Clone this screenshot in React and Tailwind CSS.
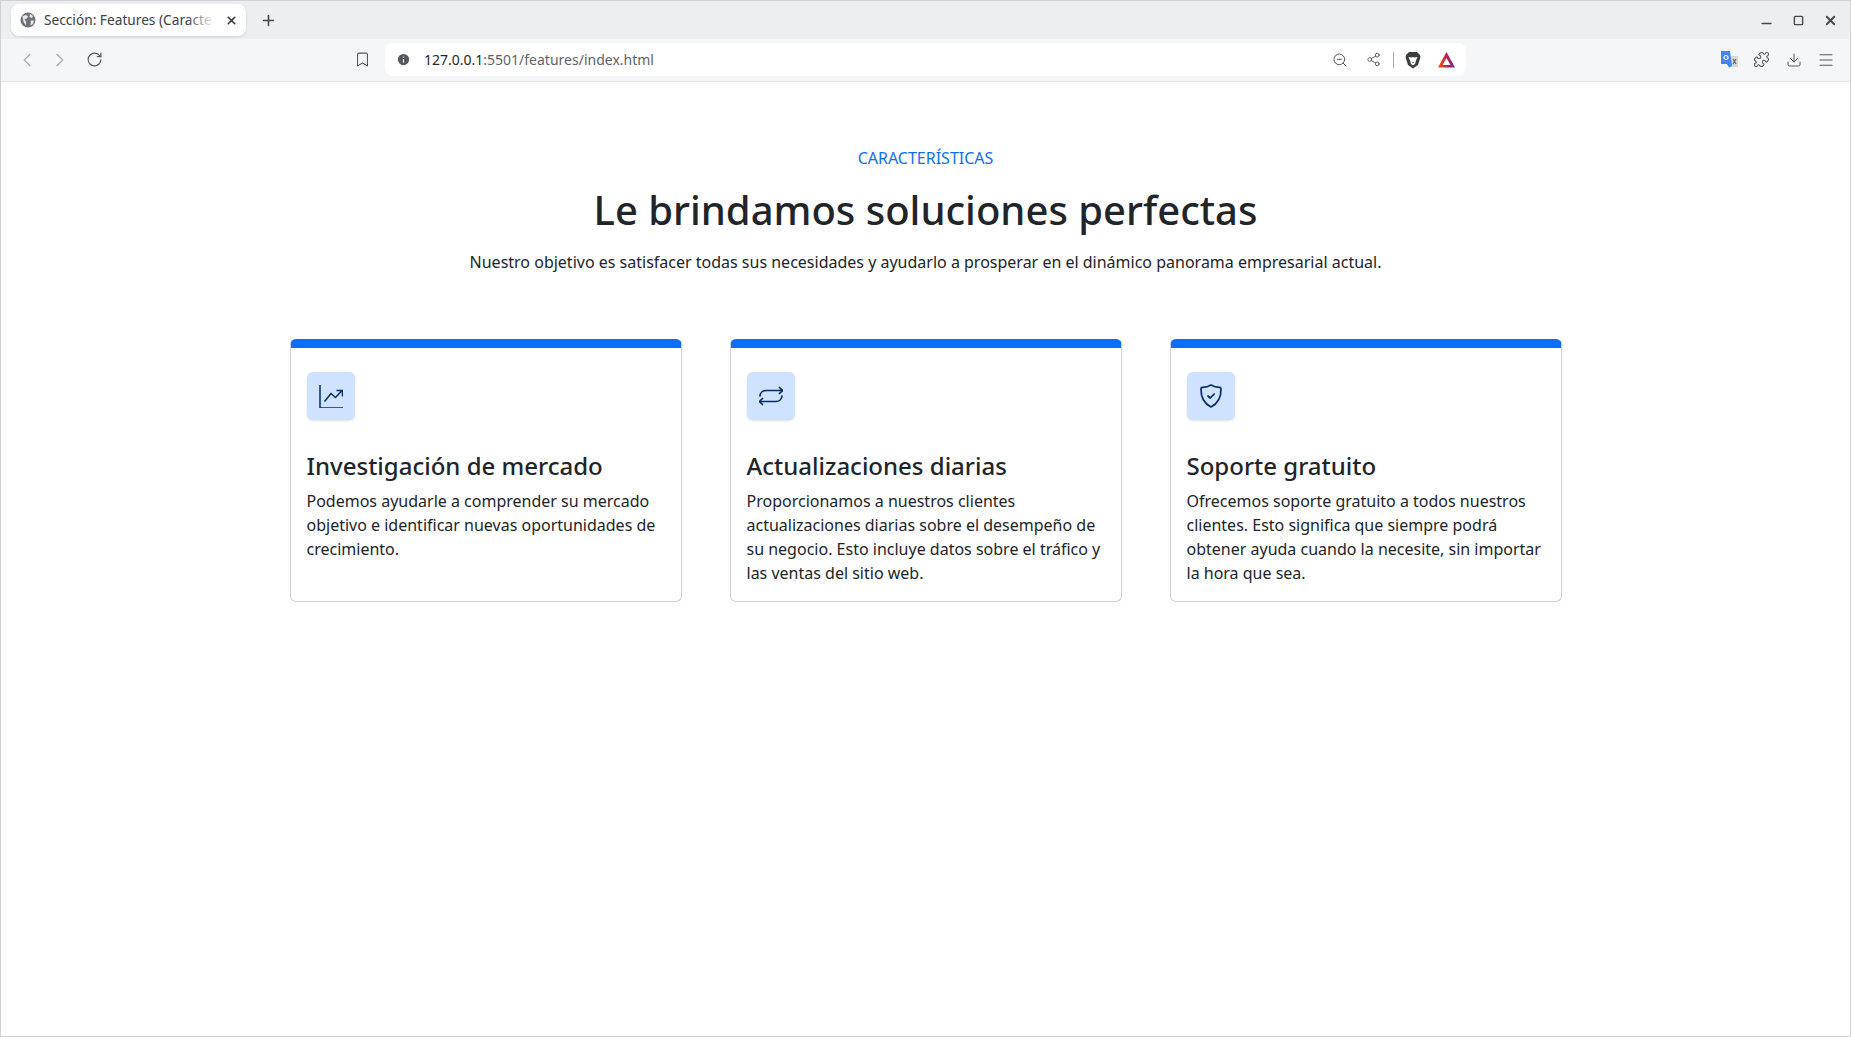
import { ChevronLeft, ChevronRight, RotateCw, Bookmark, Info, ZoomOut, Share2, Puzzle, Download, Menu, Plus, X, Minus, Square } from "lucide-react";

function ChartIcon() {
    return (
        <svg width="24" height="24" viewBox="0 0 24 24" fill="none" stroke="currentColor" strokeWidth="1.5">
            <path d="M1 1v23h23" />
            <path d="M5.500 17.500L12 9.500l4.500 4L23 6.500" />
            <path d="M17.500 6.500H23.500V12.500" />
        </svg>
    );
}

function RepeatIcon() {
    return (
        <svg width="24" height="24" viewBox="0 0 24 24" fill="none" stroke="currentColor" strokeWidth="1.7" strokeLinecap="round" strokeLinejoin="round">
            <path d="M1 12a6 6 0 0 1 6-5.500h16" />
            <path d="M20.500 3.500l3 3-3 3" />
            <path d="M23 12a6 6 0 0 1-6 5.500H1" />
            <path d="M3.500 14.500l-3 3 3 3" />
        </svg>
    );
}

function ShieldIcon() {
    return (
        <svg width="24" height="24" viewBox="0 0 24 24" fill="none" stroke="currentColor" strokeWidth="1.7" strokeLinecap="round" strokeLinejoin="round">
            <path d="M12 1C9.500 2.500 6.500 3.300 3.500 3.300 2.500 3.300 2 3.800 2 4.800 1.800 13 5 19.500 12 23 19 19.500 22.200 13 22 4.800 22 3.800 21.500 3.300 20.500 3.300 17.500 3.300 14.500 2.500 12 1z" />
            <path d="M9 12l2.200 2 4-4" />
        </svg>
    );
}

const features = [
    {
        title: "Investigación de mercado",
        text: "Podemos ayudarle a comprender su mercado objetivo e identificar nuevas oportunidades de crecimiento.",
        icon: ChartIcon,
    },
    {
        title: "Actualizaciones diarias",
        text: "Proporcionamos a nuestros clientes actualizaciones diarias sobre el desempeño de su negocio. Esto incluye datos sobre el tráfico y las ventas del sitio web.",
        icon: RepeatIcon,
    },
    {
        title: "Soporte gratuito",
        text: "Ofrecemos soporte gratuito a todos nuestros clientes. Esto significa que siempre podrá obtener ayuda cuando la necesite, sin importar la hora que sea.",
        icon: ShieldIcon,
    },
];

function BrowserBar() {
    return (
        <header className="shrink-0 font-['Noto_Sans',sans-serif]">
            <div className="h-[38px] bg-[#eceef1] flex items-end pl-[10px] pr-[12px]">
                <div className="relative w-[235px] h-[32px] mb-[3px] bg-white rounded-lg flex items-center pl-[9px] pr-[8px] gap-[8px] shadow-sm">
                    <svg width="16" height="16" viewBox="0 0 16 16" className="shrink-0">
                        <circle cx="8" cy="8" r="7.500" fill="#6f7377" />
                        <path d="M2.500 4L6 3l2 1.500-1 2-2.500.5L6 10v3.500L3.500 10zM10 2l3 2-1 2-2.500-1zM11 8.500h3l-1 3.500-2.500 1.500z" fill="#e8eaed" />
                    </svg>
                    <span className="text-[13.7px] text-[#3c4043] whitespace-nowrap w-[170px] overflow-hidden shrink-0">Sección: Features (Caracte</span>
                    <span className="absolute left-[176px] top-0 w-[28px] h-[32px] bg-gradient-to-r from-transparent to-white"></span>
                    <X size={13} className="relative text-[#33363a] shrink-0 ml-auto" strokeWidth={3} />
                </div>
                <div className="h-[37px] ml-[14px] flex items-center">
                    <Plus size={17} className="text-[#44474b]" strokeWidth={2.2} />
                </div>
                <div className="ml-auto h-[38px] flex items-center pt-[1px]">
                    <Minus size={15} className="text-[#44474b] mt-[5px]" strokeWidth={2.5} />
                    <Square size={11} className="text-[#44474b] ml-[19px]" strokeWidth={3} />
                    <X size={15} className="text-[#44474b] ml-[19px]" strokeWidth={3} />
                </div>
            </div>
            <div className="h-[43px] bg-[#f5f6f8] border-b border-[#e4e6e9] flex items-center pl-[15px] pr-[15px] pb-[1px]">
                <ChevronLeft size={22} className="text-[#a6aaae]" strokeWidth={1.3} />
                <ChevronRight size={22} className="text-[#a6aaae] ml-[11px]" strokeWidth={1.3} />
                <RotateCw size={17} className="text-[#55585c] ml-[15px]" strokeWidth={1.6} />
                <Bookmark size={17} className="text-[#55585c] ml-[251px]" strokeWidth={1.5} />
                <div className="ml-[14px] w-[1081px] h-[33px] bg-white rounded-lg flex items-center pl-[11px] pr-[11px]">
                    <Info size={15} className="text-white fill-[#55585c] shrink-0" strokeWidth={2} />
                    <span className="ml-[13px] text-[14px] text-[#24272a]">127.0.0.1<span className="text-[#5f6368]">:5501/features/index.html</span></span>
                    <div className="ml-auto flex items-center">
                        <ZoomOut size={16} className="text-[#55585c]" strokeWidth={1.5} />
                        <Share2 size={15} className="text-[#55585c] ml-[18px]" strokeWidth={1.5} />
                        <div className="w-px h-[16px] bg-[#a8abae] ml-[12px]"></div>
                        <svg width="16" height="18" viewBox="0 0 16 18" className="ml-[11px]">
                            <path d="M4 1h8l2.500 2.500L15.500 6 13 14l-5 3.500L3 14 .5 6l1-2.500z" fill="#3a3d40" />
                            <path d="M3.500 6l3 .5L8 6l1.500.5 3-.5-1.500 3.500-1 3.500-2 1.500-2-1.500-1-3.500z" fill="#fff" />
                            <path d="M7 11h2l-1 1.500z" fill="#3a3d40" />
                        </svg>
                        <svg width="17" height="16" viewBox="0 0 17 16" className="ml-[17px]">
                            <defs>
                                <linearGradient id="bat" x1="0" y1="0" x2="1" y2="0">
                                    <stop offset="0" stopColor="#ff5000" />
                                    <stop offset="0.5" stopColor="#c4204a" />
                                    <stop offset="1" stopColor="#662d91" />
                                </linearGradient>
                            </defs>
                            <path fillRule="evenodd" d="M8.500 0L17 15.500H0zM8.500 6L4.500 13h8z" fill="url(#bat)" />
                        </svg>
                    </div>
                </div>
                <div className="ml-auto flex items-center">
                    <svg width="17" height="17" viewBox="0 0 17 17">
                        <rect x="8" y="5" width="9" height="11" fill="#d5d7da" />
                        <path d="M0 0h9l2 15-3 1.500L6 13H0z" fill="#4285f4" />
                        <path d="M12 8l3 5M15 8l-3 5" stroke="#666" strokeWidth="1.200" />
                        <circle cx="5" cy="6.500" r="2" fill="none" stroke="#fff" strokeWidth="1.200" />
                    </svg>
                    <Puzzle size={17} className="text-[#55585c] ml-[15px]" strokeWidth={1.5} />
                    <Download size={16} className="text-[#55585c] ml-[16px]" strokeWidth={1.5} />
                    <Menu size={18} className="text-[#55585c] ml-[15px]" strokeWidth={1.5} />
                </div>
            </div>
        </header>
    );
}

function FeatureCard({ title, text, icon: Icon }) {
    return (
        <div className="bg-white border border-[#cfd1d4] border-t-[9px] border-t-[#0d6efd] rounded-[6px] px-[16px] pt-[24px] pb-[16px]">
            <div className="w-[48px] h-[48px] rounded-[6px] bg-[#cfe2ff] flex items-center justify-center shadow-sm text-[#052c65]">
                <Icon />
            </div>
            <h3 className="mt-[31px] text-[24px] leading-[29px] font-medium text-[#212529]">{title}</h3>
            <p className="mt-[9px] text-[16px] leading-[24px] text-[#212529]">{text}</p>
        </div>
    );
}

export default function App() {
    return (
        <div className="min-h-[1037px] flex flex-col bg-white border border-[#cfd1d4] font-['Noto_Sans',sans-serif]">
            <BrowserBar />
            <main className="flex-1">
                <div className="w-[1320px] mx-auto px-[24px] pt-[64px]">
                    <div className="text-center">
                        <p className="text-[16px] leading-[24px] text-[#0d6efd]">CARACTERÍSTICAS</p>
                        <h1 className="mt-[16px] text-[40px] leading-[48px] font-medium text-[#212529]">Le brindamos soluciones perfectas</h1>
                        <p className="mt-[16px] text-[16px] leading-[24px] text-[#212529]">Nuestro objetivo es satisfacer todas sus necesidades y ayudarlo a prosperar en el dinámico panorama empresarial actual.</p>
                    </div>
                    <div className="mt-[65px] grid grid-cols-3 gap-[48px]">
                        {features.map((f) => (
                            <FeatureCard key={f.title} {...f} />
                        ))}
                    </div>
                </div>
            </main>
        </div>
    );
}
